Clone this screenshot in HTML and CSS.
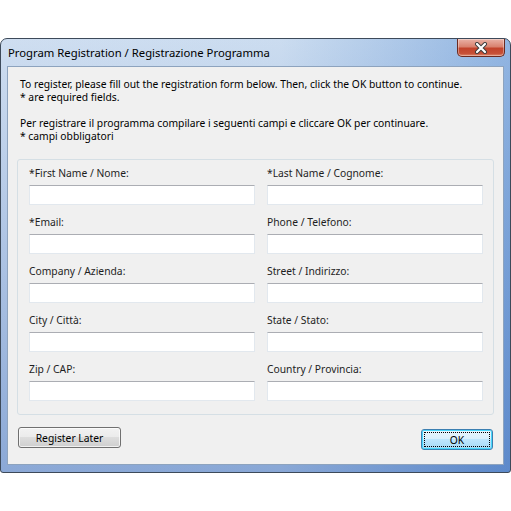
FILE: index.html
```html
<!DOCTYPE html>
<html lang="en">
<head>
  <meta charset="UTF-8">
  <title>Program Registration</title>
  <link rel="stylesheet" href="styles.css">
</head>
<body>
  <div class="window">
    <div class="titlebar">
      <span class="title">Program Registration / Registrazione Programma</span>
      <div class="close">
        <svg width="16" height="12" viewBox="0 0 16 12">
          <path d="M4 2 L12 10 M12 2 L4 10" stroke="#3b3b3b" stroke-width="4" stroke-linecap="round"/>
          <path d="M4 2 L12 10 M12 2 L4 10" stroke="#ffffff" stroke-width="2.2" stroke-linecap="round"/>
        </svg>
      </div>
    </div>
    <div class="client">
      <div class="intro">
        <p>To register, please fill out the registration form below. Then, click the OK button to continue.<br>* are required fields.</p>
        <p>Per registrare il programma compilare i seguenti campi e cliccare OK per continuare.<br>* campi obbligatori</p>
      </div>

      <div class="group">
        <div class="field">
          <label>*First Name / Nome:</label>
          <input type="text">
        </div>
        <div class="field">
          <label>*Last Name / Cognome:</label>
          <input type="text">
        </div>
        <div class="field">
          <label>*Email:</label>
          <input type="text">
        </div>
        <div class="field">
          <label>Phone / Telefono:</label>
          <input type="text">
        </div>
        <div class="field">
          <label>Company / Azienda:</label>
          <input type="text">
        </div>
        <div class="field">
          <label>Street / Indirizzo:</label>
          <input type="text">
        </div>
        <div class="field">
          <label>City / Città:</label>
          <input type="text">
        </div>
        <div class="field">
          <label>State / Stato:</label>
          <input type="text">
        </div>
        <div class="field">
          <label>Zip / CAP:</label>
          <input type="text">
        </div>
        <div class="field">
          <label>Country / Provincia:</label>
          <input type="text">
        </div>
      </div>

      <div class="actions">
        <button class="btn">Register Later</button>
        <button class="btn btn-default"><span class="focus">OK</span></button>
      </div>
    </div>
  </div>
</body>
</html>
```

FILE: styles.css
```css
body {
  margin: 0;
  padding: 0;
  background: #ffffff;
  font-family: 'Noto Sans', sans-serif;
  font-size: 10.3px;
  color: #000;
}
.window {
  margin-top: 38px;
  width: 511px;
  height: 435px;
  box-sizing: border-box;
  border: 1px solid #3d4a5a;
  border-radius: 7px 7px 3px 3px;
  padding: 0 6px 6px 6px;
  background:
    linear-gradient(180deg, rgba(255,255,255,0.15), rgba(30,80,170,0.35)),
    linear-gradient(90deg, #c6d8ee 0%, #c2d6ed 55%, #7ea8dc 100%);
}
.titlebar {
  height: 27px;
  display: flex;
  justify-content: space-between;
  align-items: flex-start;
}
.title {
  margin-top: 6px;
  margin-left: 1px;
  font-size: 11.3px;
  color: #000;
  white-space: nowrap;
}
.close {
  width: 46px;
  height: 17px;
  margin-right: -1px;
  border: 1px solid #6b2a20;
  border-top: none;
  border-radius: 0 0 5px 5px;
  background: linear-gradient(180deg, #eab2a6 0%, #d9826f 45%, #c2432b 55%, #c65037 85%, #e08a6e 100%);
  display: flex;
  align-items: center;
  justify-content: center;
  box-shadow: inset 0 0 0 1px rgba(255,255,255,0.35);
}
.client {
  height: 399px;
  box-sizing: border-box;
  border: 1px solid #8da3be;
  background: #f0f0f0;
  padding: 11px 9px 0 9px;
}
.intro {
  padding-left: 3px;
  line-height: 13px;
  white-space: nowrap;
}
.intro p {
  margin: 0 0 13px 0;
}
.intro p:last-child {
  margin-bottom: 0;
}
.group {
  margin-top: 16px;
  border: 1px solid #d5dfe5;
  border-radius: 3px;
  padding: 6px 11px 13px 11px;
  display: grid;
  grid-template-columns: 226px 216px;
  column-gap: 12px;
  row-gap: 10px;
}
.field label {
  display: block;
  line-height: 15px;
  margin-bottom: 4px;
  color: #1e1e1e;
}
.field input {
  display: block;
  width: 100%;
  height: 20px;
  box-sizing: border-box;
  border: 1px solid #e2e8ee;
  border-top-color: #abadb3;
  background: #fff;
  margin: 0;
  padding: 0 3px;
}
.actions {
  display: flex;
  justify-content: space-between;
  align-items: flex-start;
  margin-top: 12px;
  padding: 0 1px;
}
.btn {
  font-family: 'Noto Sans', sans-serif;
  font-size: 10.3px;
  color: #000;
  height: 21px;
  padding: 0;
  width: 103px;
  border: 1px solid #707070;
  border-radius: 3px;
  background: linear-gradient(180deg, #f2f2f2 0%, #ebebeb 49%, #dddddd 50%, #cfcfcf 100%);
  box-shadow: inset 0 0 0 1px rgba(255,255,255,0.7);
}
.btn-default {
  width: 72px;
  margin-top: 2px;
  border-color: #3c7fb1;
  background: linear-gradient(180deg, #eaf6fd 0%, #d9f0fc 49%, #bee6fd 50%, #a7d9f5 100%);
  box-shadow: inset 0 0 0 1px #48d7fb;
  padding: 2px;
}
.btn-default .focus {
  display: flex;
  align-items: center;
  justify-content: center;
  height: 100%;
  box-sizing: border-box;
  border: 1px dotted #000;
}
```
